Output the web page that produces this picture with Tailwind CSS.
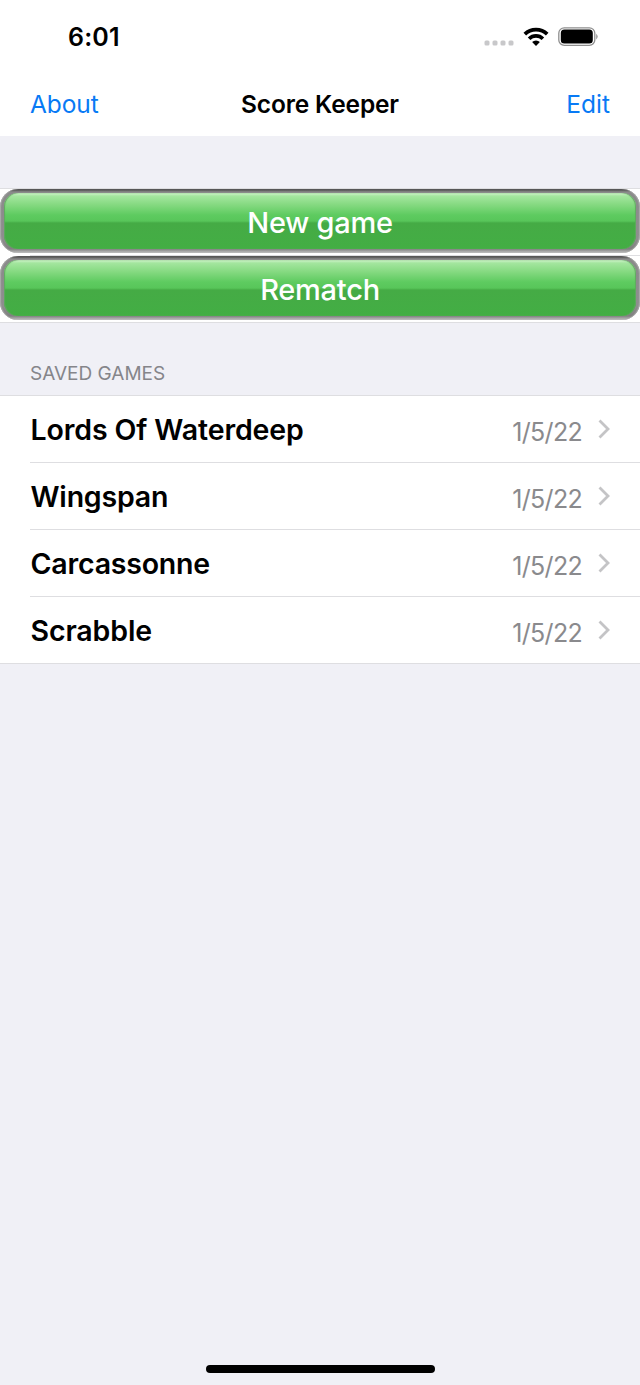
<!DOCTYPE html>
<html lang="en">
<head>
<meta charset="utf-8">
<title>Score Keeper</title>
<script src="https://cdn.jsdelivr.net/npm/@tailwindcss/browser@4"></script>
</head>
<body class="bg-[#f0f0f6] text-black font-['Inter',sans-serif]">
<div class="w-[640px] h-[1385px] flex flex-col overflow-hidden">
  <header class="bg-white h-[136px] shrink-0 flex flex-col">
    <div class="h-[73px] flex items-center justify-between pl-[68px] pr-[41px]">
      <span class="text-[25px] font-semibold leading-[30px] tracking-[0.2px]">6:01</span>
      <div class="flex items-center gap-[9px]">
        <svg class="w-[30px] h-[26px]" viewBox="0 0 30 26" fill="#c8c8ca"><rect x="0.5" y="16.5" width="5" height="5" rx="1.5"/><rect x="8.5" y="16.5" width="5" height="5" rx="1.5"/><rect x="16.5" y="16.5" width="5" height="5" rx="1.5"/><rect x="24.5" y="16.5" width="5" height="5" rx="1.5"/></svg>
        <svg class="w-[26px] h-[20px]" viewBox="0 0 26 20" fill="none" stroke="#000" stroke-width="3.7"><path d="M1.8 7.1a16 16 0 0 1 22.4 0M6.1 11.7a9.8 9.8 0 0 1 13.8 0"/><path d="M9.1 15a5.5 5.5 0 0 1 7.8 0L13 19z" fill="#000" stroke="none"/></svg>
        <svg class="w-[41px] h-[20px]" viewBox="0 0 41 20"><rect x="0.8" y="0.8" width="36" height="17.6" rx="5.5" fill="none" stroke="#8e8e8e" stroke-width="1.3"/><rect x="2.8" y="2.6" width="32" height="14" rx="3.5"/><path d="M38.4 6.8q2.3 2.8 0 5.6z" fill="#777"/></svg>
      </div>
    </div>
    <nav class="h-[61px] grid grid-cols-3 items-center px-[30px] text-[24.5px] leading-[30px]">
      <span class="text-[#087af5] tracking-[-0.1px]">About</span>
      <span class="font-semibold text-center tracking-[-0.15px] whitespace-nowrap">Score Keeper</span>
      <span class="text-[#087af5] text-right">Edit</span>
    </nav>
  </header>
  <section class="mt-[52px] shrink-0 h-[135px] bg-white border-y border-[#dedee1] flex flex-col text-white text-[29px] font-medium tracking-[-0.25px]">
    <div class="h-[64px] rounded-[18px] px-[4px] pt-[4px] pb-[4px] bg-[linear-gradient(#333_0px,#555_1px,#8a8a8a_3px,#8e8e8e_50px,#808080_60px,#c4c4c4_64px)] shadow-[inset_1px_0_1px_#aaa,inset_-1px_0_1px_#aaa]">
      <div class="h-[56px] rounded-[14px] flex items-center justify-center pt-[3px] bg-[linear-gradient(#d2f3cd_0px,#a4e69f_3px,#84d980_12px,#5ecb60_22px,#58c65a_28px,#45ab45_30px,#43ae44_100%)] shadow-[inset_1px_0_1px_#60a860,inset_-1px_0_1px_#60a860]">New game</div>
    </div>
    <div class="ml-[30px] h-[3px] border-b border-[#dedee1]"></div>
    <div class="h-[64px] rounded-[18px] px-[4px] pt-[4px] pb-[4px] bg-[linear-gradient(#333_0px,#555_1px,#8a8a8a_3px,#8e8e8e_50px,#808080_60px,#c4c4c4_64px)] shadow-[inset_1px_0_1px_#aaa,inset_-1px_0_1px_#aaa]">
      <div class="h-[56px] rounded-[14px] flex items-center justify-center pt-[3px] bg-[linear-gradient(#d2f3cd_0px,#a4e69f_3px,#84d980_12px,#5ecb60_22px,#58c65a_28px,#45ab45_30px,#43ae44_100%)] shadow-[inset_1px_0_1px_#60a860,inset_-1px_0_1px_#60a860]">Rematch</div>
    </div>
  </section>
  <h2 class="h-[72px] shrink-0 pl-[30px] pt-[37px] text-[19px] leading-[28px] text-[#85858a]">SAVED GAMES</h2>
  <ul class="bg-white border-y border-[#dedee1] shrink-0">
    <li class="pl-[30px]"><div class="h-[67px] border-b border-[#dedee1] flex items-center pr-[30px]"><span class="flex-1 text-[28.5px] font-semibold tracking-[-0.12px] pt-[2px] pl-[0.5px]">Lords Of Waterdeep</span><span class="text-[25px] text-[#8a8a8d] pt-[7px] tracking-[-0.7px]">1/5/22</span><svg class="w-[12px] h-[20px] ml-[16px]" viewBox="0 0 12 20" fill="none" stroke="#c4c4c6" stroke-width="2.8"><path d="M1.5 1.5L10 10L1.5 18.5"/></svg></div></li>
    <li class="pl-[30px]"><div class="h-[67px] border-b border-[#dedee1] flex items-center pr-[30px]"><span class="flex-1 text-[28.5px] font-semibold tracking-[-0.2px] pt-[2px] pl-[0.5px]">Wingspan</span><span class="text-[25px] text-[#8a8a8d] pt-[7px] tracking-[-0.7px]">1/5/22</span><svg class="w-[12px] h-[20px] ml-[16px]" viewBox="0 0 12 20" fill="none" stroke="#c4c4c6" stroke-width="2.8"><path d="M1.5 1.5L10 10L1.5 18.5"/></svg></div></li>
    <li class="pl-[30px]"><div class="h-[67px] border-b border-[#dedee1] flex items-center pr-[30px]"><span class="flex-1 text-[28.5px] font-semibold tracking-[-0.2px] pt-[2px] pl-[0.5px]">Carcassonne</span><span class="text-[25px] text-[#8a8a8d] pt-[7px] tracking-[-0.7px]">1/5/22</span><svg class="w-[12px] h-[20px] ml-[16px]" viewBox="0 0 12 20" fill="none" stroke="#c4c4c6" stroke-width="2.8"><path d="M1.5 1.5L10 10L1.5 18.5"/></svg></div></li>
    <li class="pl-[30px]"><div class="h-[66px] flex items-center pr-[30px]"><span class="flex-1 text-[28.5px] font-semibold tracking-[-0.12px] pt-[3px] pl-[0.5px]">Scrabble</span><span class="text-[25px] text-[#8a8a8d] pt-[8px] tracking-[-0.7px]">1/5/22</span><svg class="w-[12px] h-[20px] ml-[16px]" viewBox="0 0 12 20" fill="none" stroke="#c4c4c6" stroke-width="2.8"><path d="M1.5 1.5L10 10L1.5 18.5"/></svg></div></li>
  </ul>
  <div class="mt-auto mb-[12px] mx-auto w-[229px] h-[8px] rounded-full bg-black"></div>
</div>
</body>
</html>
